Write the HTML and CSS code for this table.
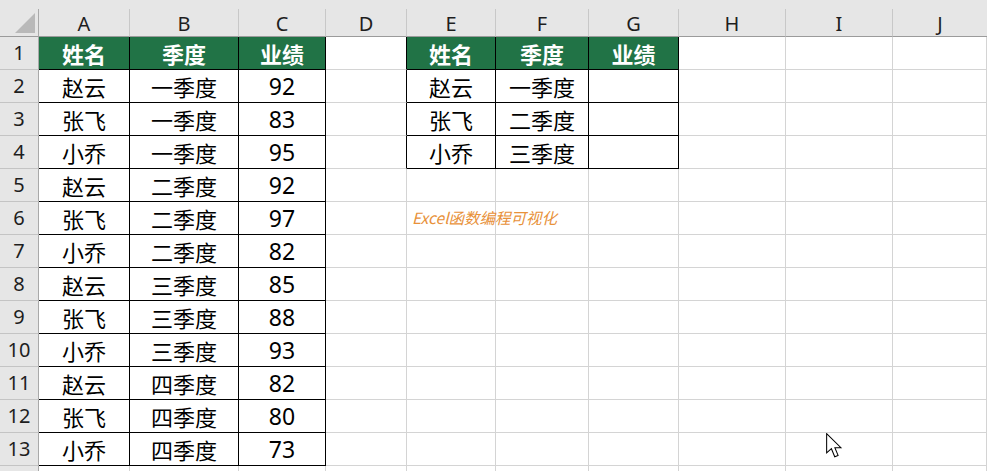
FILE: index.html
```html
<!DOCTYPE html>
<html lang="zh">
<head>
<meta charset="utf-8">
<link rel="stylesheet" href="styles.css">
</head>
<body>
<div class="sheet">
  <div class="strip"></div>

  <div class="corner"><svg width="38" height="27" viewBox="0 0 38 27"><polygon points="15,24 35,24 35,4" fill="#b9b9b9"/></svg></div>
  <div class="ch">A</div><div class="ch">B</div><div class="ch">C</div><div class="ch">D</div><div class="ch">E</div><div class="ch">F</div><div class="ch">G</div><div class="ch">H</div><div class="ch">I</div><div class="ch last">J</div>

  <div class="rh">1</div>
  <div class="c t h">姓名</div><div class="c t h">季度</div><div class="c t h">业绩</div><div class="c bl"></div>
  <div class="c t h">姓名</div><div class="c t h">季度</div><div class="c t h">业绩</div><div class="c"></div><div class="c"></div><div class="c"></div>

  <div class="rh">2</div>
  <div class="c t">赵云</div><div class="c t">一季度</div><div class="c t num">92</div><div class="c bl"></div>
  <div class="c t">赵云</div><div class="c t">一季度</div><div class="c t"></div><div class="c"></div><div class="c"></div><div class="c"></div>

  <div class="rh">3</div>
  <div class="c t">张飞</div><div class="c t">一季度</div><div class="c t num">83</div><div class="c bl"></div>
  <div class="c t">张飞</div><div class="c t">二季度</div><div class="c t"></div><div class="c"></div><div class="c"></div><div class="c"></div>

  <div class="rh">4</div>
  <div class="c t">小乔</div><div class="c t">一季度</div><div class="c t num">95</div><div class="c bl"></div>
  <div class="c t">小乔</div><div class="c t">三季度</div><div class="c t"></div><div class="c"></div><div class="c"></div><div class="c"></div>

  <div class="rh">5</div>
  <div class="c t">赵云</div><div class="c t">二季度</div><div class="c t num">92</div><div class="c"></div>
  <div class="c"></div><div class="c"></div><div class="c"></div><div class="c"></div><div class="c"></div><div class="c"></div>

  <div class="rh">6</div>
  <div class="c t">张飞</div><div class="c t">二季度</div><div class="c t num">97</div><div class="c"></div>
  <div class="c wm-cell"><span class="wm">Excel函数编程可视化</span></div><div class="c"></div><div class="c"></div><div class="c"></div><div class="c"></div><div class="c"></div>

  <div class="rh">7</div>
  <div class="c t">小乔</div><div class="c t">二季度</div><div class="c t num">82</div><div class="c"></div>
  <div class="c"></div><div class="c"></div><div class="c"></div><div class="c"></div><div class="c"></div><div class="c"></div>

  <div class="rh">8</div>
  <div class="c t">赵云</div><div class="c t">三季度</div><div class="c t num">85</div><div class="c"></div>
  <div class="c"></div><div class="c"></div><div class="c"></div><div class="c"></div><div class="c"></div><div class="c"></div>

  <div class="rh">9</div>
  <div class="c t">张飞</div><div class="c t">三季度</div><div class="c t num">88</div><div class="c"></div>
  <div class="c"></div><div class="c"></div><div class="c"></div><div class="c"></div><div class="c"></div><div class="c"></div>

  <div class="rh">10</div>
  <div class="c t">小乔</div><div class="c t">三季度</div><div class="c t num">93</div><div class="c"></div>
  <div class="c"></div><div class="c"></div><div class="c"></div><div class="c"></div><div class="c"></div><div class="c"></div>

  <div class="rh">11</div>
  <div class="c t">赵云</div><div class="c t">四季度</div><div class="c t num">82</div><div class="c"></div>
  <div class="c"></div><div class="c"></div><div class="c"></div><div class="c"></div><div class="c"></div><div class="c"></div>

  <div class="rh">12</div>
  <div class="c t">张飞</div><div class="c t">四季度</div><div class="c t num">80</div><div class="c"></div>
  <div class="c"></div><div class="c"></div><div class="c"></div><div class="c"></div><div class="c"></div><div class="c"></div>

  <div class="rh">13</div>
  <div class="c t">小乔</div><div class="c t">四季度</div><div class="c t num">73</div><div class="c"></div>
  <div class="c"></div><div class="c"></div><div class="c"></div><div class="c"></div><div class="c"></div><div class="c"></div>

  <div class="rh tail"></div>
  <div class="c tail"></div><div class="c tail"></div><div class="c tail"></div><div class="c tail"></div>
  <div class="c tail"></div><div class="c tail"></div><div class="c tail"></div><div class="c tail"></div><div class="c tail"></div><div class="c tail"></div>
</div>

<svg class="cursor" width="18" height="27" viewBox="0 0 14 21">
  <path d="M0.5,0.5 L0.5,15.5 L4.2,12.2 L6.8,18.5 L9.4,17.4 L6.9,11.4 L11.6,11.4 Z" fill="#ffffff" stroke="#000000" stroke-width="0.8" stroke-linejoin="miter"/>
</svg>
</body>
</html>
```

FILE: styles.css
```css
* {
  box-sizing: border-box;
}

html, body {
  margin: 0;
  padding: 0;
  width: 987px;
  height: 471px;
  overflow: hidden;
  background: #ffffff;
}

.sheet {
  display: grid;
  grid-template-columns: 39px 91px 109px 87px 81px 89px 93px 90px 107px 107px 1fr;
  grid-template-rows: 9px 28px repeat(13, 33px) 5px;
  font-family: "Noto Sans CJK SC", "Noto Sans", sans-serif;
}

.strip {
  grid-column: 1 / -1;
  background: #e6e6e6;
}

.corner {
  background: #e6e6e6;
  border-right: 1px solid #a9a9a9;
  border-bottom: 1px solid #9b9b9b;
}

.corner svg {
  display: block;
}

.ch {
  background: #e6e6e6;
  border-right: 1px solid #c8c8c8;
  border-bottom: 1px solid #9b9b9b;
  display: flex;
  align-items: center;
  justify-content: center;
  font-family: "Noto Sans", "Noto Sans CJK SC", sans-serif;
  font-size: 20px;
  color: #1e1e1e;
  line-height: 1;
  padding-top: 2px;
}

.ch.last {
  border-right: none;
}

.rh {
  background: #e6e6e6;
  border-right: 1px solid #a9a9a9;
  border-bottom: 1px solid #c4c4c4;
  display: flex;
  align-items: center;
  justify-content: center;
  font-family: "Noto Sans", "Noto Sans CJK SC", sans-serif;
  font-size: 20px;
  color: #1e1e1e;
  line-height: 1;
}

.c {
  background: #ffffff;
  border-right: 1px solid #d4d4d4;
  border-bottom: 1px solid #d4d4d4;
  display: flex;
  align-items: center;
  justify-content: center;
  font-size: 22px;
  color: #000000;
  line-height: 1;
  white-space: nowrap;
}

.tail {
  border-bottom: none;
}

.c.t {
  border-right-color: #000000;
  border-bottom-color: #000000;
}

.c.bl {
  border-right-color: #000000;
}

.c.h {
  background: #217346;
  color: #ffffff;
  font-weight: 700;
}

.c.num {
  font-family: "Noto Sans", "Noto Sans CJK SC", sans-serif;
  font-size: 23px;
}

.wm-cell {
  justify-content: flex-start;
  overflow: visible;
  position: relative;
}

.wm {
  padding-left: 5px;
  font-size: 15.5px;
  font-style: italic;
  color: #e8913a;
  position: relative;
  z-index: 1;
}

.cursor {
  position: absolute;
  left: 826px;
  top: 433px;
}
```
